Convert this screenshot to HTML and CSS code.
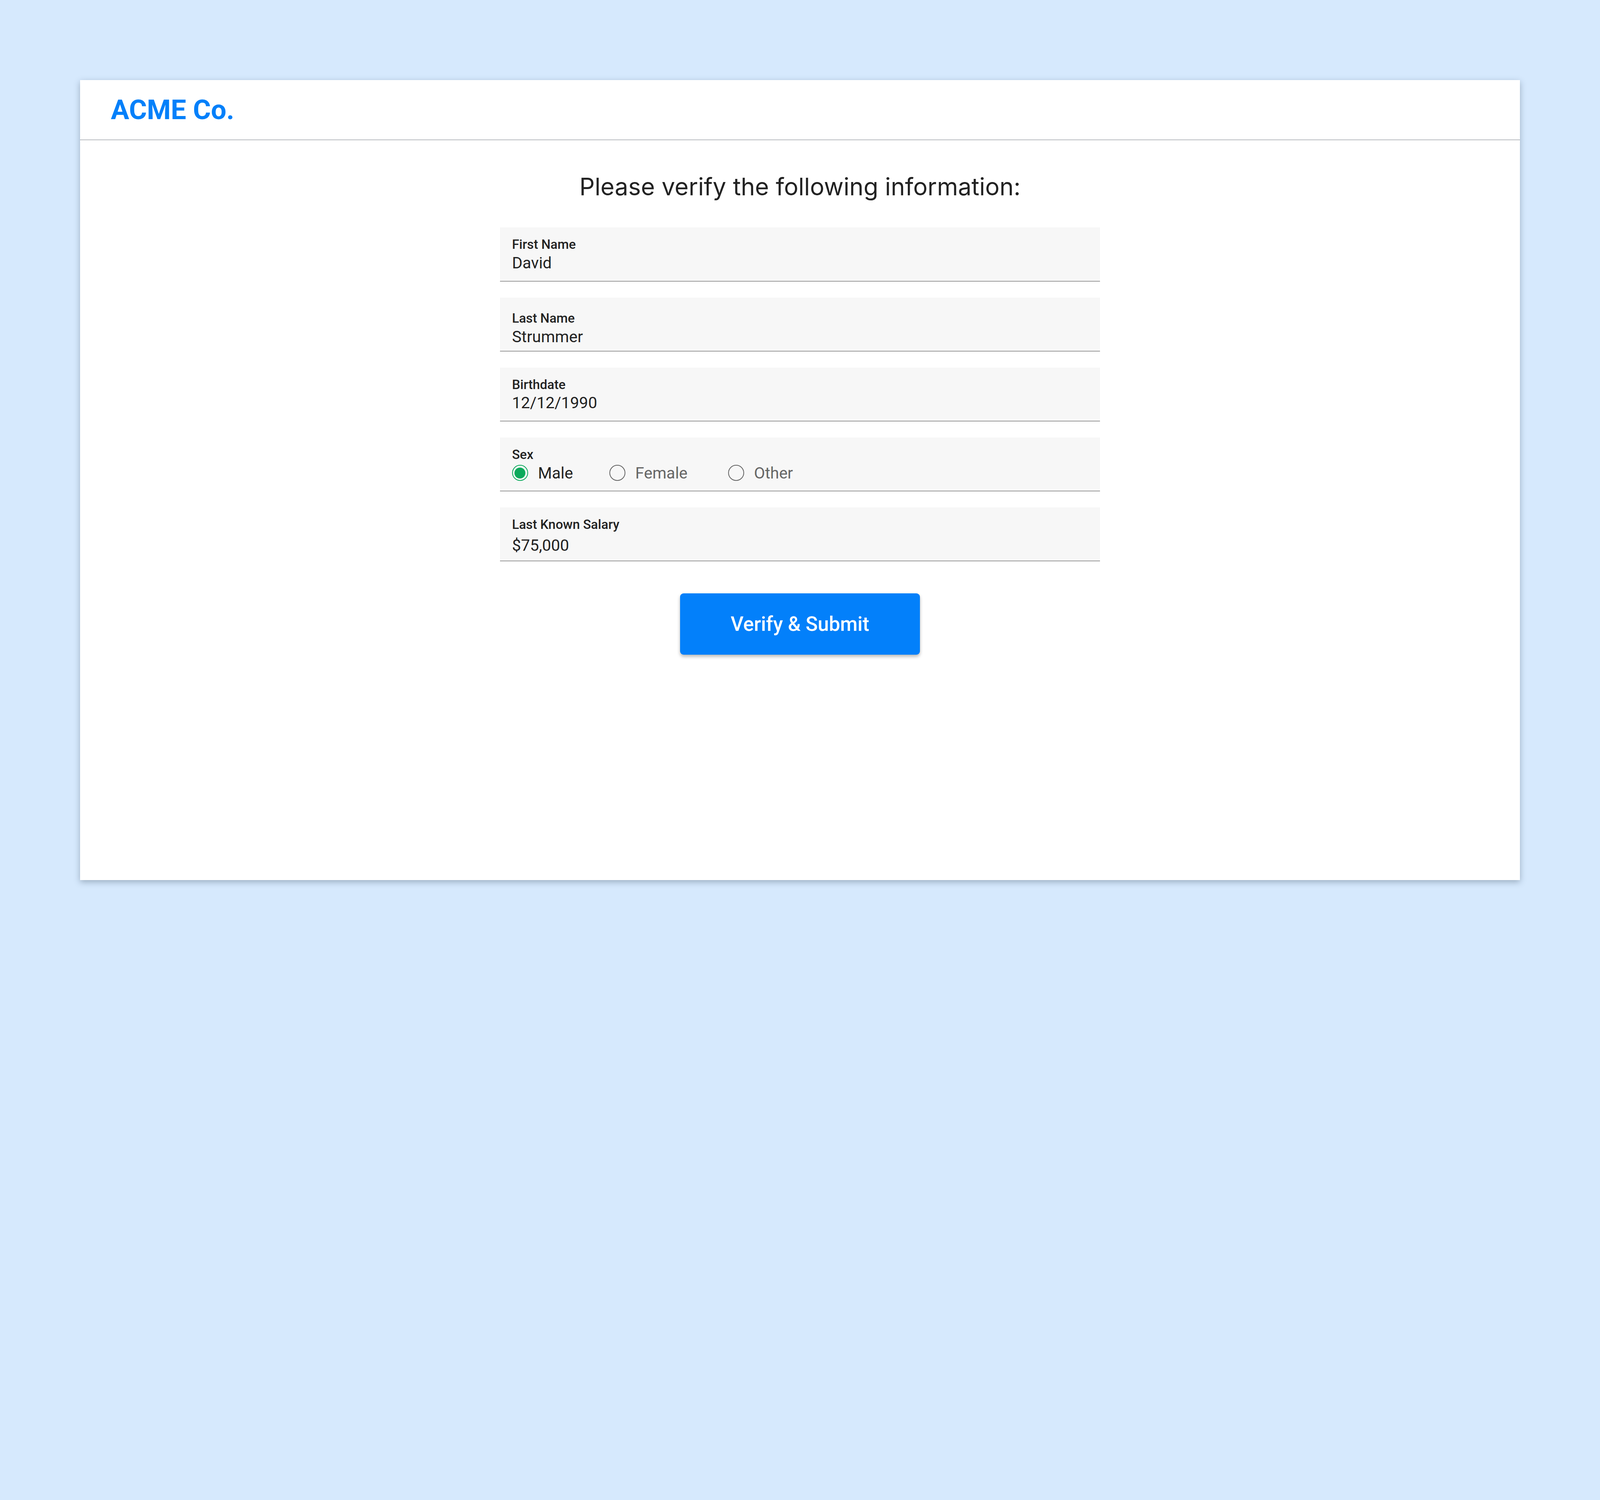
FILE: index.html
```html
<!DOCTYPE html>
<html lang="en">

<head>
    <meta charset="UTF-8">
    <meta name="viewport" content="width=device-width, initial-scale=1.0">
    <title>ACME Co. - Verify Information</title>
    <link rel="stylesheet" href="styles.css">
</head>

<body>
    <div class="card">
        <div class="header">
            <span class="logo">ACME Co.</span>
        </div>

        <div class="content">
            <h2 class="title">Please verify the following information:</h2>

            <div class="field">
                <div class="field-label">First Name</div>
                <div class="field-value">David</div>
            </div>

            <div class="field field-low">
                <div class="field-label">Last Name</div>
                <div class="field-value">Strummer</div>
            </div>

            <div class="field">
                <div class="field-label">Birthdate</div>
                <div class="field-value">12/12/1990</div>
            </div>

            <div class="field">
                <div class="field-label">Sex</div>
                <div class="radio-row">
                    <label class="option selected"><span class="radio checked"></span>Male</label>
                    <label class="option"><span class="radio"></span>Female</label>
                    <label class="option"><span class="radio"></span>Other</label>
                </div>
            </div>

            <div class="field">
                <div class="field-label">Last Known Salary</div>
                <div class="field-value salary">$75,000</div>
            </div>

            <button class="submit-button">Verify &amp; Submit</button>
        </div>
    </div>
</body>

</html>
```

FILE: styles.css
```css
body {
    font-family: Roboto, 'Liberation Sans', sans-serif;
    margin: 0;
    padding: 204.8px;
    background-color: #d6e9fd;
    color: #222;
}

.card {
    background: #fff;
    height: 2048px;
    box-shadow: 0 5px 15px rgba(40, 60, 80, 0.35);
}

.header {
    height: 152px;
    border-bottom: 2.56px solid #b9bcc0;
    display: flex;
    align-items: center;
    padding-left: 79px;
}

.logo {
    font-size: 70px;
    font-weight: 700;
    color: #0380fa;
}

.content {
    display: flex;
    flex-direction: column;
    align-items: center;
}

.title {
    font-family: Inter, 'Liberation Sans', sans-serif;
    font-weight: 400;
    font-size: 61.44px;
    line-height: 61.44px;
    color: #222;
    margin: 88.6px 0 73.6px;
}

.field {
    width: 1536px;
    height: 138.24px;
    box-sizing: border-box;
    background: #f7f7f7;
    border-bottom: 2.56px solid #9a9a9a;
    padding: 25px 30.72px 0;
    margin-bottom: 40.96px;
}

.field-low {
    padding-top: 34.6px;
}

.field-label {
    font-size: 33.28px;
    font-weight: 500;
    line-height: 38.4px;
    color: #222;
}

.field-value {
    font-size: 40.96px;
    line-height: 48.64px;
    margin-top: 3.2px;
    color: #222;
}

.field-value.salary {
    margin-top: 9.6px;
}

.radio-row {
    display: grid;
    grid-template-columns: 249px 304px auto;
    margin-top: 3.2px;
    height: 48.64px;
}

.option {
    display: flex;
    align-items: center;
    font-size: 40.96px;
    line-height: 48.64px;
    color: #666;
}

.option.selected {
    color: #222;
}

.radio {
    width: 40.96px;
    height: 40.96px;
    box-sizing: border-box;
    border: 2px solid #646464;
    border-radius: 50%;
    margin-right: 25.6px;
    display: flex;
    align-items: center;
    justify-content: center;
}

.radio.checked {
    border: 2.56px solid #0ba95b;
}

.radio.checked::after {
    content: '';
    width: 28px;
    height: 28px;
    border-radius: 50%;
    background: #0ba95b;
}

.submit-button {
    margin-top: 40.96px;
    width: 614.4px;
    height: 156.8px;
    background-color: #0380fa;
    color: #fff;
    border: none;
    border-radius: 9px;
    font-family: Roboto, 'Liberation Sans', sans-serif;
    font-size: 51.2px;
    font-weight: 500;
    box-shadow: 0 5px 9px rgba(0, 0, 0, 0.28);
    cursor: pointer;
}
```
